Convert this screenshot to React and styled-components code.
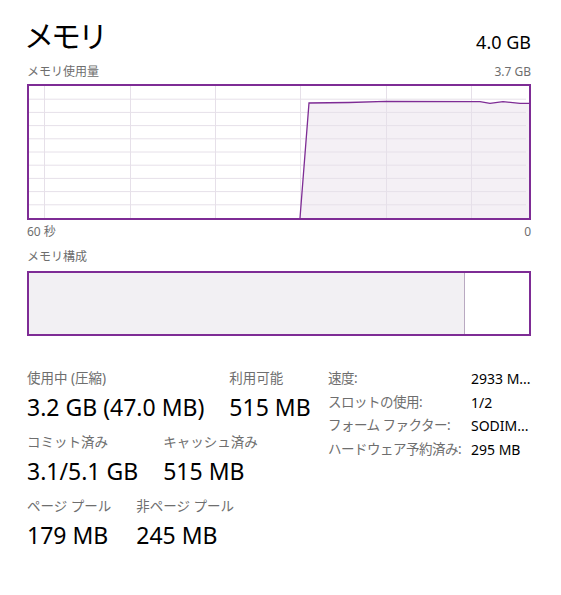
import React from 'react';
import styled, { createGlobalStyle } from 'styled-components';

const GlobalStyle = createGlobalStyle`
    html, body {
        margin: 0;
        padding: 0;
        background: #ffffff;
    }
    body {
        font-family: "Noto Sans", "Noto Sans CJK JP", sans-serif;
        color: #000000;
    }
`;

const Colors = {
    purple: '#7e2c95',
    grid: '#e6e0e9',
    fill: '#f4f0f5',
    used: '#f2f0f3',
    divider: '#b9a9c1',
    label: '#6e6e6e'
};

const Page = styled.div`
    width: 504px;
    padding: 18px 30px 40px 27px;
`;

const SpreadRow = styled.div`
    display: flex;
    justify-content: space-between;
    align-items: ${props => props.align || 'center'};
    margin-top: ${props => props.top || 0}px;
`;

const Title = styled.h1`
    margin: 0 0 0 -3px;
    font-size: 30px;
    line-height: 36px;
    font-weight: 400;
    letter-spacing: -3px;
`;

const Capacity = styled.span`
    font-size: 18px;
    line-height: 24px;
`;

const Caption = styled.span`
    font-size: 12px;
    line-height: 16px;
    color: ${Colors.label};
`;

const CaptionBlock = styled(Caption)`
    display: block;
    margin-top: ${props => props.top || 0}px;
`;

const ChartBox = styled.div`
    margin-top: 4px;
    height: 132px;
    border: 2px solid ${Colors.purple};
    line-height: 0;

    svg {
        display: block;
    }
`;

const CompositionBox = styled.div`
    margin-top: 6px;
    height: 61px;
    border: 2px solid ${Colors.purple};
    display: flex;
`;

const UsedPart = styled.div`
    width: ${props => props.share}%;
    background: ${Colors.used};
    border-right: 1px solid ${Colors.divider};
`;

const Stats = styled.div`
    margin-top: 30px;
    display: flex;
    align-items: flex-start;
`;

const StatColumn = styled.div`
    flex: 1;
    display: flex;
    flex-direction: column;
    gap: 8px;
`;

const StatRow = styled.div`
    display: flex;
    gap: 25px;
`;

const Stat = styled.div`
    display: flex;
    flex-direction: column;
    gap: 2px;
`;

const StatLabel = styled.span`
    font-size: 13.5px;
    line-height: 24px;
    color: ${Colors.label};
`;

const StatValue = styled.span`
    font-size: 23px;
    line-height: 30px;
    white-space: nowrap;
`;

const InfoTable = styled.div`
    width: 203px;
    margin-top: 1px;
    display: grid;
    grid-template-columns: 143px 60px;
    line-height: 23.7px;
`;

const InfoKey = styled.span`
    font-size: 13.5px;
    letter-spacing: -0.5px;
    color: ${Colors.label};
    white-space: nowrap;
`;

const InfoValue = styled.span`
    font-size: 14px;
    white-space: nowrap;
`;

const W = 500;
const H = 132;
const vLines = [15, 101, 186, 271, 357, 442];
const hLines = Array.from({ length: 9 }, (_, i) => (H / 10) * (i + 1));
const usage = [
    [271, H], [280, 17], [320, 16.5], [357, 15.4], [451, 15.6],
    [461, 17.3], [474, 15.7], [491, 17.3], [500, 17.3]
];

const UsageChart = () => {
    const line = usage.map(([x, y], i) => `${i ? 'L' : 'M'}${x} ${y}`).join(' ');
    const area = `${line} L${W} ${H} Z`;
    return (
        <svg width={W} height={H} viewBox={`0 0 ${W} ${H}`}>
            <path d={area} fill={Colors.fill} />
            {hLines.map(y => (
                <line key={y} x1="0" x2={W - 3} y1={y} y2={y} stroke={Colors.grid} strokeWidth="1" />
            ))}
            {vLines.map(x => (
                <line key={x} x1={x + 0.5} x2={x + 0.5} y1="0" y2={H} stroke={Colors.grid} strokeWidth="1" />
            ))}
            <path d={line} fill="none" stroke={Colors.purple} strokeWidth="1.3" />
        </svg>
    );
};

const statRows = [
    [['使用中 (圧縮)', '3.2 GB (47.0 MB)'], ['利用可能', '515 MB']],
    [['コミット済み', '3.1/5.1 GB'], ['キャッシュ済み', '515 MB']],
    [['ページ プール', '179 MB'], ['非ページ プール', '245 MB']]
];

const info = [
    ['速度:', '2933 M...'],
    ['スロットの使用:', '1/2'],
    ['フォーム ファクター:', 'SODIM...'],
    ['ハードウェア予約済み:', '295 MB']
];

const App = () => (
    <Page>
        <GlobalStyle />
        <SpreadRow align="flex-end">
            <Title>メモリ</Title>
            <Capacity>4.0 GB</Capacity>
        </SpreadRow>
        <SpreadRow top={10}>
            <Caption>メモリ使用量</Caption>
            <Caption>3.7 GB</Caption>
        </SpreadRow>
        <ChartBox>
            <UsageChart />
        </ChartBox>
        <SpreadRow top={4}>
            <Caption>60 秒</Caption>
            <Caption>0</Caption>
        </SpreadRow>
        <CaptionBlock top={9}>メモリ構成</CaptionBlock>
        <CompositionBox>
            <UsedPart share={87} />
        </CompositionBox>
        <Stats>
            <StatColumn>
                {statRows.map((row, i) => (
                    <StatRow key={i}>
                        {row.map(([label, value]) => (
                            <Stat key={label}>
                                <StatLabel>{label}</StatLabel>
                                <StatValue>{value}</StatValue>
                            </Stat>
                        ))}
                    </StatRow>
                ))}
            </StatColumn>
            <InfoTable>
                {info.map(([key, value]) => (
                    <React.Fragment key={key}>
                        <InfoKey>{key}</InfoKey>
                        <InfoValue>{value}</InfoValue>
                    </React.Fragment>
                ))}
            </InfoTable>
        </Stats>
    </Page>
);

export default App;
